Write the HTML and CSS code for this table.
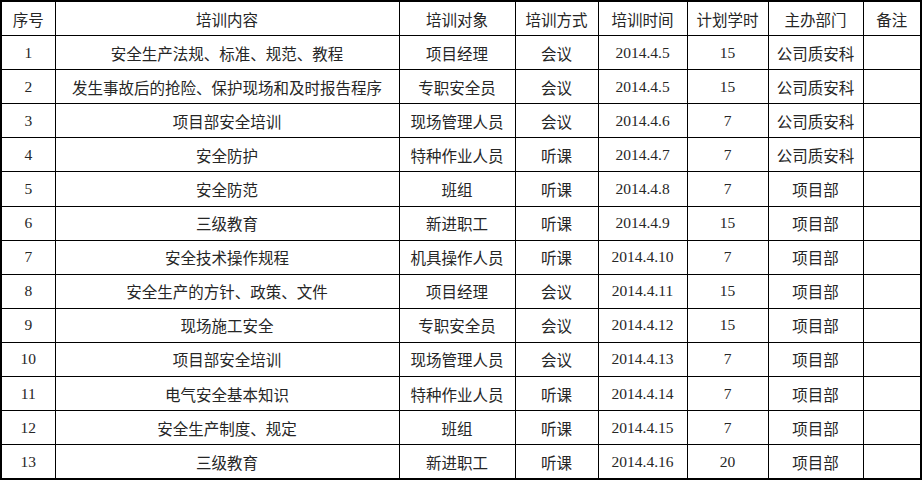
FILE: index.html
```html
<!DOCTYPE html>
<html lang="zh-CN">
<head>
<meta charset="utf-8">
<title>安全培训计划</title>
<link rel="stylesheet" href="styles.css">
</head>
<body>
<table class="plan">
  <colgroup>
    <col class="c-no">
    <col class="c-content">
    <col class="c-target">
    <col class="c-method">
    <col class="c-date">
    <col class="c-hours">
    <col class="c-dept">
    <col class="c-note">
  </colgroup>
  <thead>
    <tr><th>序号</th><th>培训内容</th><th>培训对象</th><th>培训方式</th><th>培训时间</th><th>计划学时</th><th>主办部门</th><th>备注</th></tr>
  </thead>
  <tbody>
    <tr><td>1</td><td>安全生产法规、标准、规范、教程</td><td>项目经理</td><td>会议</td><td>2014.4.5</td><td>15</td><td>公司质安科</td><td></td></tr>
    <tr><td>2</td><td>发生事故后的抢险、保护现场和及时报告程序</td><td>专职安全员</td><td>会议</td><td>2014.4.5</td><td>15</td><td>公司质安科</td><td></td></tr>
    <tr><td>3</td><td>项目部安全培训</td><td>现场管理人员</td><td>会议</td><td>2014.4.6</td><td>7</td><td>公司质安科</td><td></td></tr>
    <tr><td>4</td><td>安全防护</td><td>特种作业人员</td><td>听课</td><td>2014.4.7</td><td>7</td><td>公司质安科</td><td></td></tr>
    <tr><td>5</td><td>安全防范</td><td>班组</td><td>听课</td><td>2014.4.8</td><td>7</td><td>项目部</td><td></td></tr>
    <tr><td>6</td><td>三级教育</td><td>新进职工</td><td>听课</td><td>2014.4.9</td><td>15</td><td>项目部</td><td></td></tr>
    <tr><td>7</td><td>安全技术操作规程</td><td>机具操作人员</td><td>听课</td><td>2014.4.10</td><td>7</td><td>项目部</td><td></td></tr>
    <tr><td>8</td><td>安全生产的方针、政策、文件</td><td>项目经理</td><td>会议</td><td>2014.4.11</td><td>15</td><td>项目部</td><td></td></tr>
    <tr><td>9</td><td>现场施工安全</td><td>专职安全员</td><td>会议</td><td>2014.4.12</td><td>15</td><td>项目部</td><td></td></tr>
    <tr><td>10</td><td>项目部安全培训</td><td>现场管理人员</td><td>会议</td><td>2014.4.13</td><td>7</td><td>项目部</td><td></td></tr>
    <tr><td>11</td><td>电气安全基本知识</td><td>特种作业人员</td><td>听课</td><td>2014.4.14</td><td>7</td><td>项目部</td><td></td></tr>
    <tr><td>12</td><td>安全生产制度、规定</td><td>班组</td><td>听课</td><td>2014.4.15</td><td>7</td><td>项目部</td><td></td></tr>
    <tr><td>13</td><td>三级教育</td><td>新进职工</td><td>听课</td><td>2014.4.16</td><td>20</td><td>项目部</td><td></td></tr>
  </tbody>
</table>
</body>
</html>
```
FILE: styles.css
```css
html, body {
  margin: 0;
  padding: 0;
  background: #ffffff;
}

.plan {
  border-collapse: collapse;
  table-layout: fixed;
  width: 921px;
  border: 2px solid #000;
  font-family: "Liberation Serif", "Noto Sans CJK SC", serif;
  font-size: 15.5px;
  color: #262626;
}

.plan th,
.plan td {
  border: 1px solid #000;
  height: 33.1px;
  padding: 0;
  text-align: center;
  vertical-align: middle;
  font-weight: normal;
  white-space: nowrap;
  overflow: hidden;
}

.c-no { width: 54px; }
.c-content { width: 344px; }
.c-target { width: 116px; }
.c-method { width: 83px; }
.c-date { width: 89px; }
.c-hours { width: 81px; }
.c-dept { width: 95px; }
.c-note { width: 58px; }
```
